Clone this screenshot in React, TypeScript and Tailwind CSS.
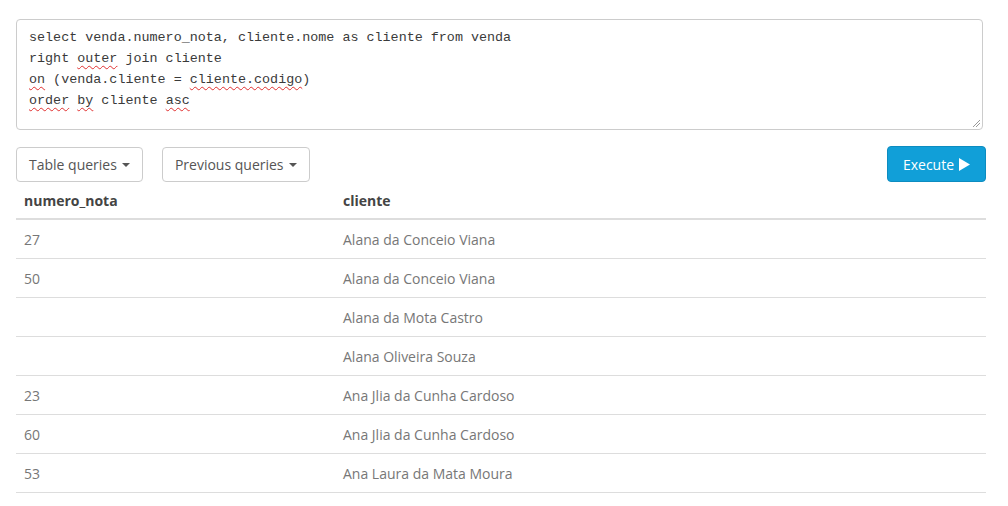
import React from "react";

const rows: [string, string][] = [
  ["27", "Alana da Conceio Viana"],
  ["50", "Alana da Conceio Viana"],
  ["", "Alana da Mota Castro"],
  ["", "Alana Oliveira Souza"],
  ["23", "Ana Jlia da Cunha Cardoso"],
  ["60", "Ana Jlia da Cunha Cardoso"],
  ["53", "Ana Laura da Mata Moura"],
];

const Squiggle = ({ children }: { children: React.ReactNode }) => (
  <span className="underline decoration-wavy decoration-[#e03030] decoration-1 underline-offset-[3px]">{children}</span>
);

export default function App() {
  return (
    <div className="w-[1008px] h-[506px] bg-white overflow-hidden flex" style={{ fontFamily: '"Open Sans", sans-serif' }}>
      <div className="flex-1 pl-4 pr-[22px] pt-[19px]">
        <div className="relative w-[967px] h-[111px] border border-[#cccccc] rounded-[4px] pl-3 pt-[7px] text-[#3a3a3a] text-[13.4px] leading-[21px]" style={{ fontFamily: '"Liberation Mono", monospace' }}>
          <div>select venda.numero_nota, cliente.nome as cliente from venda</div>
          <div>right <Squiggle>outer</Squiggle> join cliente</div>
          <div><Squiggle>on</Squiggle> (venda.cliente = <Squiggle>cliente.codigo</Squiggle>)</div>
          <div><Squiggle>order</Squiggle> <Squiggle>by</Squiggle> cliente <Squiggle>asc</Squiggle></div>
          <svg className="absolute right-[1px] bottom-[1px]" width="10" height="10" viewBox="0 0 10 10">
            <line x1="9" y1="2" x2="2" y2="9" stroke="#999" strokeWidth="1" />
            <line x1="9" y1="5" x2="5" y2="9" stroke="#999" strokeWidth="1" />
          </svg>
        </div>
        <div className="flex items-start mt-4">
          <button className="h-[35px] mt-[1px] px-[12px] border border-[#cccccc] rounded-[4px] text-[#555] text-[14px] flex items-center gap-[5px]">
            Table queries
            <span className="w-0 h-0 border-l-[4px] border-r-[4px] border-t-[4px] border-l-transparent border-r-transparent border-t-[#555]" />
          </button>
          <button className="h-[35px] mt-[1px] ml-[19px] px-[12px] border border-[#cccccc] rounded-[4px] text-[#555] text-[14px] flex items-center gap-[5px]">
            Previous queries
            <span className="w-0 h-0 border-l-[4px] border-r-[4px] border-t-[4px] border-l-transparent border-r-transparent border-t-[#555]" />
          </button>
          <div className="flex-1" />
          <button className="h-[36px] w-[99px] bg-[#119fd8] border border-[#0d8cc0] rounded-[4px] text-white text-[14px] flex items-center justify-center gap-[5px]">
            Execute
            <svg width="11" height="13" viewBox="0 0 11 13"><path d="M0 0 L11 6.5 L0 13 Z" fill="white" /></svg>
          </button>
        </div>
        <div className="w-[970px] text-[14px]">
          <div className="flex h-[38px] items-center border-b-2 border-[#dddddd] font-bold text-[#444]">
            <div className="w-[327px] pl-[8px]">numero_nota</div>
            <div>cliente</div>
          </div>
          {rows.map((r, i) => (
            <div key={i} className="flex h-[39px] items-center border-b border-[#dddddd] text-[#777]">
              <div className="w-[327px] pl-[8px]">{r[0]}</div>
              <div>{r[1]}</div>
            </div>
          ))}
        </div>
      </div>
      <div className="w-[2px] h-full bg-[#e3e8ee]" />
    </div>
  );
}
